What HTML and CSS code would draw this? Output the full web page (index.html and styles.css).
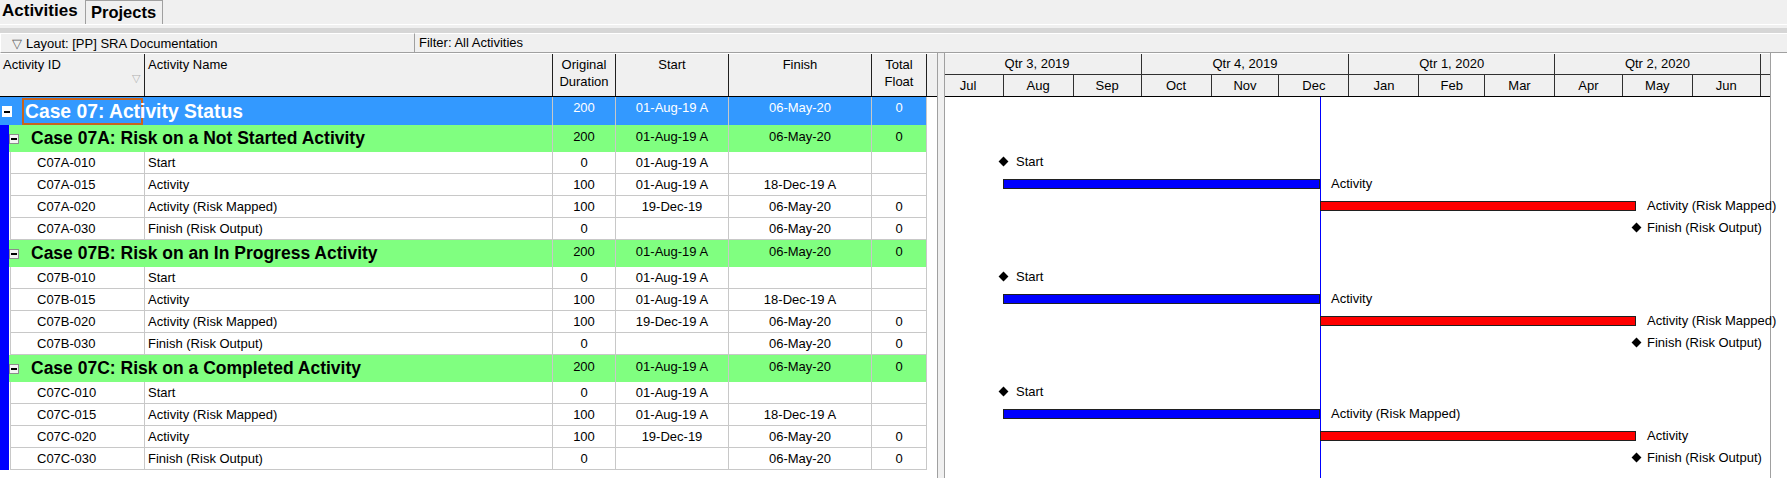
FILE: index.html
```html
<!DOCTYPE html>
<html lang="en">
<head>
  <meta charset="UTF-8">
  <title>Activities</title>
  <link rel="stylesheet" href="styles.css">
</head>
<body>
  <div class="tabs">
    <div class="tab active">Activities</div>
    <div class="tab">Projects</div>
  </div>
  <div class="tab-rule"></div>
  <div class="band"></div>
  <div class="toolbar">
    <div class="layout-box"><span class="tri">&#9661;</span>Layout: [PP] SRA Documentation</div>
    <div class="filter">Filter: All Activities</div>
  </div>

  <div class="workspace">
    <!-- activity table -->
    <div class="grid">
      <div class="grid-head">
        <div class="hcell left">Activity ID<span class="sort">&#9661;</span></div>
        <div class="hcell left">Activity Name</div>
        <div class="hcell">Original<br>Duration</div>
        <div class="hcell">Start</div>
        <div class="hcell">Finish</div>
        <div class="hcell">Total<br>Float</div>
        <div class="hcell filler"></div>
      </div>

      <div class="grid-body">
        <div class="row proj">
          <div class="title"><span class="tog tog-proj"></span><span class="focus">Case 07: Activity Status</span></div>
          <div class="val">200</div><div class="val">01-Aug-19 A</div><div class="val">06-May-20</div><div class="val">0</div><div class="pad"></div>
        </div>

        <div class="children">
          <div class="row wbs">
            <div class="title"><span class="tog"></span>Case 07A: Risk on a Not Started Activity</div>
            <div class="val">200</div><div class="val">01-Aug-19 A</div><div class="val">06-May-20</div><div class="val">0</div><div class="pad"></div>
          </div>
          <div class="row act"><div class="id">C07A-010</div><div class="name">Start</div><div class="num">0</div><div class="num">01-Aug-19 A</div><div class="num"></div><div class="num"></div><div class="pad"></div></div>
          <div class="row act"><div class="id">C07A-015</div><div class="name">Activity</div><div class="num">100</div><div class="num">01-Aug-19 A</div><div class="num">18-Dec-19 A</div><div class="num"></div><div class="pad"></div></div>
          <div class="row act"><div class="id">C07A-020</div><div class="name">Activity (Risk Mapped)</div><div class="num">100</div><div class="num">19-Dec-19</div><div class="num">06-May-20</div><div class="num">0</div><div class="pad"></div></div>
          <div class="row act"><div class="id">C07A-030</div><div class="name">Finish (Risk Output)</div><div class="num">0</div><div class="num"></div><div class="num">06-May-20</div><div class="num">0</div><div class="pad"></div></div>

          <div class="row wbs">
            <div class="title"><span class="tog"></span>Case 07B: Risk on an In Progress Activity</div>
            <div class="val">200</div><div class="val">01-Aug-19 A</div><div class="val">06-May-20</div><div class="val">0</div><div class="pad"></div>
          </div>
          <div class="row act"><div class="id">C07B-010</div><div class="name">Start</div><div class="num">0</div><div class="num">01-Aug-19 A</div><div class="num"></div><div class="num"></div><div class="pad"></div></div>
          <div class="row act"><div class="id">C07B-015</div><div class="name">Activity</div><div class="num">100</div><div class="num">01-Aug-19 A</div><div class="num">18-Dec-19 A</div><div class="num"></div><div class="pad"></div></div>
          <div class="row act"><div class="id">C07B-020</div><div class="name">Activity (Risk Mapped)</div><div class="num">100</div><div class="num">19-Dec-19 A</div><div class="num">06-May-20</div><div class="num">0</div><div class="pad"></div></div>
          <div class="row act"><div class="id">C07B-030</div><div class="name">Finish (Risk Output)</div><div class="num">0</div><div class="num"></div><div class="num">06-May-20</div><div class="num">0</div><div class="pad"></div></div>

          <div class="row wbs">
            <div class="title"><span class="tog"></span>Case 07C: Risk on a Completed Activity</div>
            <div class="val">200</div><div class="val">01-Aug-19 A</div><div class="val">06-May-20</div><div class="val">0</div><div class="pad"></div>
          </div>
          <div class="row act"><div class="id">C07C-010</div><div class="name">Start</div><div class="num">0</div><div class="num">01-Aug-19 A</div><div class="num"></div><div class="num"></div><div class="pad"></div></div>
          <div class="row act"><div class="id">C07C-015</div><div class="name">Activity (Risk Mapped)</div><div class="num">100</div><div class="num">01-Aug-19 A</div><div class="num">18-Dec-19 A</div><div class="num"></div><div class="pad"></div></div>
          <div class="row act"><div class="id">C07C-020</div><div class="name">Activity</div><div class="num">100</div><div class="num">19-Dec-19</div><div class="num">06-May-20</div><div class="num">0</div><div class="pad"></div></div>
          <div class="row act"><div class="id">C07C-030</div><div class="name">Finish (Risk Output)</div><div class="num">0</div><div class="num"></div><div class="num">06-May-20</div><div class="num">0</div><div class="pad"></div></div>
        </div>
      </div>
    </div>

    <div class="splitter"></div>

    <!-- gantt chart -->
    <div class="gantt">
      <div class="gantt-head">
        <div class="scale qtrs">
          <div class="q92">Qtr 3, 2019</div>
          <div class="q92">Qtr 4, 2019</div>
          <div class="q91">Qtr 1, 2020</div>
          <div class="q91">Qtr 2, 2020</div>
          <div class="q92"></div>
        </div>
        <div class="scale months">
          <div class="m31">Jul</div><div class="m31">Aug</div><div class="m30">Sep</div>
          <div class="m31">Oct</div><div class="m30">Nov</div><div class="m31">Dec</div>
          <div class="m31">Jan</div><div class="m29">Feb</div><div class="m31">Mar</div>
          <div class="m30">Apr</div><div class="m31">May</div><div class="m30">Jun</div>
          <div class="m31"></div><div class="m31"></div>
        </div>
      </div>

      <div class="gantt-body">
        <div class="dd-line"></div>

        <div class="g-row proj"></div>
        <div class="g-row wbs"></div>
        <div class="g-row act"><span class="ms" style="left:58px"></span><span class="lbl" style="left:71px">Start</span></div>
        <div class="g-row act"><span class="bar actual" style="left:58px;width:317px"></span><span class="lbl" style="left:386px">Activity</span></div>
        <div class="g-row act"><span class="bar remain" style="left:375px;width:316px"></span><span class="lbl" style="left:702px">Activity (Risk Mapped)</span></div>
        <div class="g-row act"><span class="ms" style="left:691px"></span><span class="lbl" style="left:702px">Finish (Risk Output)</span></div>

        <div class="g-row wbs"></div>
        <div class="g-row act"><span class="ms" style="left:58px"></span><span class="lbl" style="left:71px">Start</span></div>
        <div class="g-row act"><span class="bar actual" style="left:58px;width:317px"></span><span class="lbl" style="left:386px">Activity</span></div>
        <div class="g-row act"><span class="bar remain" style="left:375px;width:316px"></span><span class="lbl" style="left:702px">Activity (Risk Mapped)</span></div>
        <div class="g-row act"><span class="ms" style="left:691px"></span><span class="lbl" style="left:702px">Finish (Risk Output)</span></div>

        <div class="g-row wbs"></div>
        <div class="g-row act"><span class="ms" style="left:58px"></span><span class="lbl" style="left:71px">Start</span></div>
        <div class="g-row act"><span class="bar actual" style="left:58px;width:317px"></span><span class="lbl" style="left:386px">Activity (Risk Mapped)</span></div>
        <div class="g-row act"><span class="bar remain" style="left:375px;width:316px"></span><span class="lbl" style="left:702px">Activity</span></div>
        <div class="g-row act"><span class="ms" style="left:691px"></span><span class="lbl" style="left:702px">Finish (Risk Output)</span></div>
      </div>
    </div>

    <div class="vscroll"></div>
  </div>
</body>
</html>
```

FILE: styles.css
```css
body {
  margin: 0;
  width: 1787px;
  height: 478px;
  overflow: hidden;
  background: #f0f0f0;
  font-family: "Liberation Sans", Arial, sans-serif;
  font-size: 13px;
  color: #000;
}

/* tabs */
.tabs {
  display: flex;
  height: 24px;
}

.tab {
  box-sizing: border-box;
  height: 24px;
  line-height: 22px;
  font-size: 16.5px;
  font-weight: bold;
  width: 78px;
  padding-left: 5px;
  border: 1px solid #a0a0a0;
  border-bottom: none;
}

.tab.active {
  width: 85px;
  padding-left: 2px;
  font-size: 17px;
  border: none;
}

.tab-rule {
  height: 3px;
  border-top: 1px solid #fff;
}

.band {
  height: 5px;
  background: #d6d6d6;
}

/* layout / filter bar */
.toolbar {
  display: flex;
  height: 20px;
  line-height: 19px;
}

.layout-box {
  box-sizing: border-box;
  width: 415px;
  height: 20px;
  border: 1px solid;
  border-color: #fff #a0a0a0 #a0a0a0 #fff;
  padding-left: 11px;
}

.tri {
  font-size: 13px;
  color: #606060;
  margin-right: 4px;
}

.filter {
  padding-left: 4px;
  flex: 1;
  border-top: 1px solid #fff;
  border-bottom: 1px solid #a0a0a0;
  box-sizing: border-box;
  height: 20px;
  line-height: 17px;
}

/* main area */
.workspace {
  display: flex;
  height: 425px;
}

.grid {
  width: 937px;
  flex-shrink: 0;
  background: #fff;
}

.grid-head {
  display: grid;
  grid-template-columns: 145px 408px 63px 113px 143px 55px 1fr;
  height: 44px;
  box-sizing: border-box;
  border-top: 1px solid #fff;
  border-bottom: 1px solid #000;
  background: #f0f0f0;
}

.hcell {
  position: relative;
  border-right: 1px solid #202020;
  text-align: center;
  line-height: 17px;
  padding-top: 2px;
}

.hcell.left {
  text-align: left;
  padding-left: 3px;
}

.hcell.filler {
  border-right: none;
}

.sort {
  position: absolute;
  right: 4px;
  top: 16px;
  font-size: 11px;
  color: #b0b0b0;
}

.row {
  display: grid;
  grid-template-columns: 145px 408px 63px 113px 143px 55px 1fr;
}

.children {
  border-left: 9px solid #0000ff;
}

.children .row {
  grid-template-columns: 136px 408px 63px 113px 143px 55px 1fr;
}

.row.proj {
  height: 28px;
  background: #3399ff;
  color: #fff;
}

.row.wbs {
  height: 27px;
  background: #80ff80;
}

.title {
  grid-column: span 2;
  display: flex;
  align-items: center;
  white-space: nowrap;
  font-weight: bold;
  font-size: 17.5px;
  border-right: 1px solid #c8c8c8;
}

.proj .title {
  font-size: 19.3px;
}

.tog {
  position: relative;
  box-sizing: border-box;
  width: 10px;
  height: 10px;
  border: 1px solid #8c8c8c;
  background: #f4f4f4;
  margin-right: 12px;
}

.tog::after {
  content: "";
  position: absolute;
  left: 1px;
  top: 3px;
  width: 6px;
  height: 2px;
  background: #000;
}

.tog-proj {
  width: 10px;
  height: 11px;
  margin-left: 2px;
  margin-right: 10px;
  border: none;
  background: #fff;
}

.tog-proj::after {
  left: 2px;
  top: 5px;
}

.focus {
  box-sizing: border-box;
  width: 121px;
  height: 27px;
  margin-top: 1px;
  border: 2px solid #c8641e;
  padding-left: 1px;
  line-height: 23px;
  overflow: visible;
}

.val {
  text-align: center;
  line-height: 15px;
  padding-top: 4px;
  border-right: 1px solid #c8c8c8;
}

.proj .val {
  padding-top: 3px;
}

.pad {
  background: #fff;
}

.row.act {
  height: 22px;
  line-height: 21px;
}

.row.act > div {
  border-bottom: 1px solid #c8c8c8;
  border-right: 1px solid #c8c8c8;
  white-space: nowrap;
}

.row.act > .pad {
  border: none;
}

.id {
  padding-left: 26px;
  margin-left: 1px;
  border-left: 1px solid #c8c8c8;
}

.name {
  padding-left: 3px;
}

.num {
  text-align: center;
}

.splitter {
  width: 8px;
  flex-shrink: 0;
  box-sizing: border-box;
  border-left: 1px solid #a0a0a0;
  border-right: 1px solid #a0a0a0;
  background: #f0f0f0;
}

/* gantt */
.gantt {
  flex: 1;
  min-width: 0;
  background: #fff;
}

.gantt-head {
  height: 44px;
  background: #f0f0f0;
  border-top: 1px solid #fff;
  box-sizing: border-box;
  overflow: hidden;
}

.scale {
  display: flex;
  margin-left: -11.4px;
}

.scale > div {
  flex-shrink: 0;
  box-sizing: border-box;
  border-right: 1px solid #303030;
  text-align: center;
}

.qtrs {
  height: 21px;
  line-height: 20px;
  border-bottom: 1px solid #303030;
  box-sizing: border-box;
}

.months {
  height: 22px;
  line-height: 21px;
  border-bottom: 1px solid #000;
  box-sizing: border-box;
}

.q92 { width: 207.92px; }
.q91 { width: 205.66px; }
.m31 { width: 70.06px; }
.m30 { width: 67.8px; }
.m29 { width: 65.54px; }

.gantt-body {
  position: relative;
  height: 381px;
}

.dd-line {
  position: absolute;
  left: 375px;
  top: 0;
  bottom: 0;
  width: 1px;
  background: #0000ff;
}

.g-row {
  position: relative;
  z-index: 1;
}

.g-row.proj { height: 28px; }
.g-row.wbs { height: 27px; }
.g-row.act { height: 22px; }

.bar {
  position: absolute;
  top: 5px;
  height: 10px;
  box-sizing: border-box;
  border: 1px solid #202020;
}

.bar.actual { background: #0000ff; }
.bar.remain { background: #ff0000; }

.ms {
  position: absolute;
  top: 6px;
  width: 7px;
  height: 7px;
  margin-left: -3.5px;
  background: #000;
  transform: rotate(45deg);
}

.lbl {
  position: absolute;
  top: 1px;
  line-height: 18px;
  white-space: nowrap;
}

.vscroll {
  width: 17px;
  flex-shrink: 0;
  box-sizing: border-box;
  border-left: 1px solid #a0a0a0;
  background: #fff;
}
```
